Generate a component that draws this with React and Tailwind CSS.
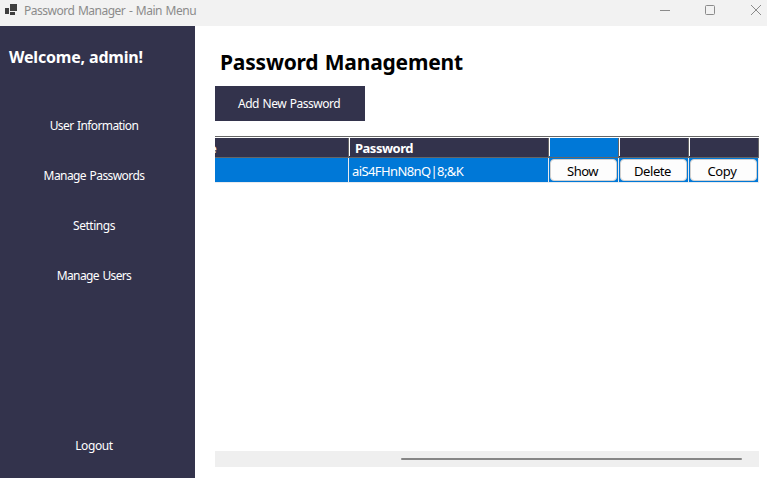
const navItems = [
  { label: "User Information", style: "tracking-[-0.6px]" },
  { label: "Manage Passwords", style: "tracking-[-0.58px]" },
  { label: "Settings", style: "tracking-[-0.46px]" },
  { label: "Manage Users", style: "tracking-[-0.63px]" },
];

function TitleBar() {
  return (
    <header className="flex h-[26px] shrink-0 items-start bg-[#f2f2f2] text-[#8b8b8b]">
      <svg className="mt-1 ml-[5px] h-3 w-3" viewBox="0 0 12 12" shapeRendering="crispEdges" fill="#3f3f3f">
        <path d="M5 0h7v7H5zM0 4h4v6H0zM5 8h5v3H5z" />
      </svg>
      <span className="ml-[7px] mt-[2px] text-[12px] leading-[18px] tracking-[-0.5px] [word-spacing:1px] whitespace-nowrap">Password Manager - Main Menu</span>
      <div className="ml-auto flex">
        <svg className="h-5 w-[107px]" viewBox="0 0 107 20" fill="none" stroke="#8b8b8b">
          <path d="M0 10.5h10" />
          <rect x="45.5" y="5.5" width="9" height="9" rx="1" />
          <path d="M91 5l10 10M101 5L91 15" />
        </svg>
      </div>
    </header>
  );
}

function Sidebar() {
  return (
    <aside className="flex w-[195px] shrink-0 flex-col bg-[#33334c] text-white">
      <h2 className="mt-[19px] ml-[9px] text-[16px] leading-6 font-bold tracking-[-0.18px] whitespace-nowrap">Welcome, admin!</h2>
      <nav className="mt-8 flex flex-col pr-[7px]">
        {navItems.map((item) => (
          <button key={item.label} className={`h-[50px] text-[12px] [word-spacing:1px] whitespace-nowrap ${item.style}`}>
            {item.label}
          </button>
        ))}
      </nav>
      <button className="mt-auto mr-[7px] mb-[7px] h-[50px] text-[12px] tracking-[-0.4px]">Logout</button>
    </aside>
  );
}

function HeaderCell({ className, children }) {
  return (
    <div className={`h-5 shrink-0 border-r border-b border-[#666666] ${className}`}>
      <div className="h-[18px] overflow-hidden border-l border-white pl-[5px] text-[13px] leading-[20px] font-bold tracking-[-0.5px] whitespace-nowrap">
        {children}
      </div>
    </div>
  );
}

function ActionCell({ label, style }) {
  return (
    <div className="h-[25px] w-[70px] border-r border-b border-[#e8eaee] bg-[#0078d7] pt-px pl-px">
      <button className={`block h-[22px] w-[67px] rounded-[4px] border border-[#d0d0d0] bg-[#fdfdfd] text-[13px] leading-[23px] text-black ${style}`}>
        {label}
      </button>
    </div>
  );
}

function PasswordGrid() {
  return (
    <div className="mt-[15px] w-[544px] border-t border-[#666666] pt-px text-white">
      <div className="flex">
        <div className="h-5 w-[134px] overflow-hidden border-r border-b border-[#666666] bg-[#33334c] text-[13px] leading-[20px] font-bold">
          <span className="-ml-[6px]">e</span>
        </div>
        <HeaderCell className="w-[200px] bg-[#33334c]">Password</HeaderCell>
        <HeaderCell className="w-[70px] bg-[#0078d7]" />
        <HeaderCell className="w-[70px] bg-[#33334c]" />
        <HeaderCell className="w-[70px] bg-[#33334c]" />
      </div>
      <div className="flex">
        <div className="h-[25px] w-[134px] border-r border-b border-[#e8eaee] bg-[#0078d7]" />
        <div className="h-[25px] w-[200px] border-r border-b border-[#e8eaee] bg-[#0078d7] pl-[3px] text-[13px] leading-[27px] tracking-[-0.6px] whitespace-nowrap">
          aiS4FHnN8nQ|8;&amp;K
        </div>
        <ActionCell label="Show" style="pr-[2px] tracking-[-0.5px]" />
        <ActionCell label="Delete" style="pr-[2px] tracking-[-0.45px]" />
        <ActionCell label="Copy" style="pr-[3px] tracking-[-0.3px]" />
      </div>
    </div>
  );
}

export default function App() {
  return (
    <div className="flex h-[478px] w-[767px] flex-col overflow-hidden bg-white font-['Noto_Sans','Open_Sans',sans-serif]">
      <TitleBar />
      <div className="flex min-h-0 flex-1">
        <Sidebar />
        <main className="flex flex-1 flex-col pl-5">
          <h1 className="mt-5 ml-[5px] h-8 text-[21px] leading-8 font-bold tracking-[-0.2px] [word-spacing:1px] whitespace-nowrap text-black">Password Management</h1>
          <button className="mt-2 h-[35px] w-[150px] bg-[#33334c] pt-px pr-[2px] text-[12px] tracking-[-0.5px] [word-spacing:1px] whitespace-nowrap text-white">Add New Password</button>
          <PasswordGrid />
          <div className="mt-auto mb-[11px] flex h-4 w-[544px] items-center bg-[#efefef] pl-[186px]">
            <div className="h-[2px] w-[341px] rounded-full bg-[#868686]" />
          </div>
        </main>
      </div>
    </div>
  );
}
